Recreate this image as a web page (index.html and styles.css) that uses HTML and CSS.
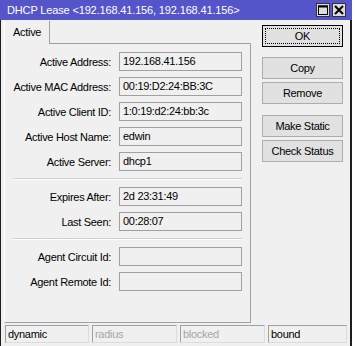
FILE: index.html
```html
<!DOCTYPE html>
<html lang="en">
<head>
  <meta charset="UTF-8" />
  <title>DHCP Lease</title>
  <link rel="stylesheet" href="styles.css">
</head>
<body>
  <div class="window">
    <div class="titlebar">
      <span class="title">DHCP Lease &lt;192.168.41.156, 192.168.41.156&gt;</span>
      <div class="title-buttons">
        <span class="tbtn">
          <svg width="10" height="10" viewBox="0 0 10 10"><rect x="0.5" y="1" width="9" height="8.5" fill="none" stroke="#000" stroke-width="1"/><rect x="0" y="0.5" width="10" height="2" fill="#000"/></svg>
        </span>
        <span class="tbtn">
          <svg width="10" height="10" viewBox="0 0 10 10"><path d="M1 1 L9 9 M9 1 L1 9" stroke="#000" stroke-width="2"/></svg>
        </span>
      </div>
    </div>

    <div class="content">
      <div class="main">
        <div class="tabs-area">
          <div class="tabs"><span class="tab">Active</span></div>
          <div class="panel">
            <div class="form">
              <label>Active Address:</label><div class="field">192.168.41.156</div>
              <label>Active MAC Address:</label><div class="field">00:19:D2:24:BB:3C</div>
              <label>Active Client ID:</label><div class="field">1:0:19:d2:24:bb:3c</div>
              <label>Active Host Name:</label><div class="field">edwin</div>
              <label>Active Server:</label><div class="field">dhcp1</div>
              <div class="sep"></div>
              <label>Expires After:</label><div class="field">2d 23:31:49</div>
              <label>Last Seen:</label><div class="field">00:28:07</div>
              <div class="sep"></div>
              <label>Agent Circuit Id:</label><div class="field"></div>
              <label>Agent Remote Id:</label><div class="field"></div>
            </div>
          </div>
        </div>

        <div class="buttons">
          <button class="btn btn-default">OK</button>
          <button class="btn btn-first">Copy</button>
          <button class="btn">Remove</button>
          <button class="btn btn-group">Make Static</button>
          <button class="btn">Check Status</button>
        </div>
      </div>

      <div class="statusbar">
        <div class="status s1">dynamic</div>
        <div class="status s2 off">radius</div>
        <div class="status s3 off">blocked</div>
        <div class="status s4">bound</div>
      </div>
    </div>
  </div>
</body>
</html>
```

FILE: styles.css
```css
* {
  box-sizing: border-box;
}

body {
  margin: 0;
  background: #ffffff;
  font-family: "Liberation Sans", Arial, sans-serif;
  font-size: 11px;
  letter-spacing: -0.3px;
  color: #000;
}

.window {
  width: 352px;
  height: 346px;
  display: flex;
  flex-direction: column;
}

.titlebar {
  height: 20px;
  background: #5555c9;
  display: flex;
  align-items: center;
  justify-content: space-between;
  padding: 0 6px 0 7px;
}

.title {
  color: #ffffff;
  font-size: 11px;
  letter-spacing: -0.15px;
  white-space: nowrap;
}

.title-buttons {
  display: flex;
  gap: 2px;
}

.tbtn {
  width: 14px;
  height: 14px;
  background: #dcdcdc;
  border: 1px solid #333;
  display: flex;
  align-items: center;
  justify-content: center;
}

.content {
  flex: 1;
  background: #f0f0f0;
  border-left: 1px solid #1e1e1e;
  border-right: 2px solid #1e1e1e;
  display: flex;
  flex-direction: column;
}

.main {
  display: flex;
  height: 303px;
  padding-left: 3px;
}

.tabs-area {
  width: 247px;
  padding-top: 1px;
  display: flex;
  flex-direction: column;
}

.tabs {
  display: flex;
  height: 22px;
}

.tab {
  position: relative;
  z-index: 1;
  width: 46px;
  height: 23px;
  padding-left: 8px;
  line-height: 22px;
  background: #f0f0f0;
  border-left: 1px solid #ffffff;
  border-right: 1px solid #a0a0a0;
}

.panel {
  height: 280px;
  border: 1px solid #a0a0a0;
  border-left-color: #ffffff;
  padding: 8px 8px 0 0;
}

.form {
  display: grid;
  grid-template-columns: 106px 123px;
  column-gap: 8px;
  row-gap: 6px;
  align-items: center;
}

.form label {
  text-align: right;
  white-space: nowrap;
}

.field {
  height: 19px;
  line-height: 17px;
  padding-left: 3px;
  border: 1px solid #a0a0a0;
  white-space: nowrap;
}

.sep {
  grid-column: 1 / -1;
  margin: 1px 0 1px 8px;
  height: 2px;
  border-top: 1px solid #d0d0d0;
  border-bottom: 1px solid #ffffff;
}

.buttons {
  margin-left: 11px;
  padding-top: 5px;
  width: 81px;
  display: flex;
  flex-direction: column;
  gap: 3px;
}

.btn {
  height: 22px;
  background: #e1e1e1;
  border: 1px solid #adadad;
  font-family: inherit;
  font-size: 11px;
  letter-spacing: -0.3px;
  color: #000;
  padding: 0;
}

.btn-default {
  border-color: #000;
  outline: 1px dotted #000;
  outline-offset: -4px;
}

.btn-first {
  margin-top: 7px;
}

.btn-group {
  margin-top: 8px;
}

.statusbar {
  display: flex;
  gap: 3px;
  margin-top: 2px;
  padding-left: 4px;
  height: 18px;
}

.status {
  height: 18px;
  line-height: 16px;
  padding-left: 2px;
  border: 1px solid #a0a0a0;
  border-right-color: #dcdcdc;
  border-bottom-color: #dcdcdc;
}

.s1 { width: 84px; }
.s2 { width: 85px; }
.s3 { width: 85px; }
.s4 { width: 79px; }

.off {
  color: #a6a6a6;
}
```
